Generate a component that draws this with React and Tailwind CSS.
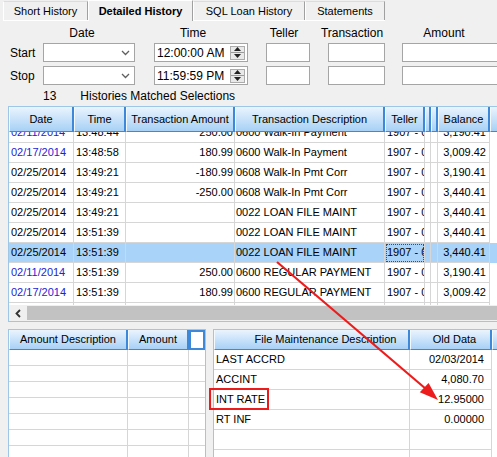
import React from 'react'

const gridCols = [
  { w: 'w-[65px]', label: 'Date' },
  { w: 'w-[52px]', label: 'Time' },
  { w: 'w-[109px]', label: 'Transaction Amount' },
  { w: 'w-[150px]', label: 'Transaction Description' },
  { w: 'w-[40px]', label: 'Teller' },
  { w: 'w-[6px]', label: '' },
  { w: 'w-[7px]', label: '' },
  { w: 'w-[52px]', label: 'Balance' },
  { w: 'w-[29px]', label: '' },
]

const rows = [
  { date: '02/11/2014', time: '13:48:44', amt: '250.00', desc: '0600 Walk-In Payment', bal: '3,190.41', blue: true },
  { date: '02/17/2014', time: '13:48:58', amt: '180.99', desc: '0600 Walk-In Payment', bal: '3,009.42', blue: true },
  { date: '02/25/2014', time: '13:49:21', amt: '-180.99', desc: '0608 Walk-In Pmt Corr', bal: '3,190.41' },
  { date: '02/25/2014', time: '13:49:21', amt: '-250.00', desc: '0608 Walk-In Pmt Corr', bal: '3,440.41' },
  { date: '02/25/2014', time: '13:49:21', amt: '', desc: '0022 LOAN FILE MAINT', bal: '3,440.41' },
  { date: '02/25/2014', time: '13:51:39', amt: '', desc: '0022 LOAN FILE MAINT', bal: '3,440.41' },
  { date: '02/25/2014', time: '13:51:39', amt: '', desc: '0022 LOAN FILE MAINT', bal: '3,440.41', selected: true },
  { date: '02/11/2014', time: '13:51:39', amt: '250.00', desc: '0600 REGULAR PAYMENT', bal: '3,190.41', blue: true },
  { date: '02/17/2014', time: '13:51:39', amt: '180.99', desc: '0600 REGULAR PAYMENT', bal: '3,009.42', blue: true },
  { date: '', time: '', amt: '', desc: '', bal: '' },
]

const fmRows = [
  ['LAST ACCRD', '02/03/2014'],
  ['ACCINT', '4,080.70'],
  ['INT RATE', '12.95000'],
  ['RT INF', '0.00000'],
  ['', ''],
  ['', ''],
]

const headCell =
  'h-full shrink-0 flex items-center justify-center whitespace-nowrap overflow-hidden bg-linear-to-b from-[#eaf4fd] to-[#a7d1f5] border-l border-l-[#f4f9fe] border-r-2 border-r-[#3d88d8] border-b border-b-[#3d88d8]'
const cell = 'h-full shrink-0 flex items-center whitespace-nowrap overflow-hidden border-r border-b border-[#d6d6d6]'

const Tab = ({ w, selected, children }) => (
  <div
    className={
      selected
        ? `${w} h-[21px] -mb-px flex items-center justify-center font-bold bg-[#f0f0f0] border-t border-l border-white border-r border-r-[#a0a0a0]`
        : `${w} h-[19px] flex items-center justify-center bg-[#f0f0f0] border-t border-t-[#dcdcdc] border-l border-l-white border-r border-r-[#a0a0a0]`
    }
  >
    {children}
  </div>
)

const Box = ({ w, children }) => (
  <div className={`${w} h-[19px] shrink-0 bg-white border border-[#a5a5a5] flex items-center`}>{children}</div>
)

const Combo = () => (
  <Box w="w-[92px]">
    <div className="flex-1" />
    <svg width="9" height="6" viewBox="0 0 9 6" className="mr-[4px]">
      <path d="M1 1 L4.5 4.5 L8 1" fill="none" stroke="#606060" strokeWidth="1.3" />
    </svg>
  </Box>
)

const TimeBox = ({ value }) => (
  <Box w="w-[94px]">
    <span className="pl-[2px] flex-1 text-[12px]">{value}</span>
    <div className="w-[15px] h-[14px] mr-[2px] border border-[#acacac] bg-[#e9e9e9] flex flex-col">
      <div className="flex-1 flex items-center justify-center border-b border-[#9a9a9a]">
        <svg width="7" height="4" viewBox="0 0 7 4"><path d="M0 4 L3.5 0 L7 4 Z" fill="#222" /></svg>
      </div>
      <div className="flex-1 flex items-center justify-center">
        <svg width="7" height="4" viewBox="0 0 7 4"><path d="M0 0 L3.5 4 L7 0 Z" fill="#222" /></svg>
      </div>
    </div>
  </Box>
)

const FilterRow = ({ label, time }) => (
  <div className="flex items-center h-[19px]">
    <div className="w-[43px] shrink-0 pl-[10px] text-[12px]">{label}</div>
    <Combo />
    <div className="ml-[19px]"><TimeBox value={time} /></div>
    <div className="ml-[18px]"><Box w="w-[44px]" /></div>
    <div className="ml-[18px]"><Box w="w-[57px]" /></div>
    <div className="ml-[17px]"><Box w="w-[120px]" /></div>
  </div>
)

export default function App() {
  return (
    <div className="relative w-[497px] h-[457px] overflow-hidden bg-[#f0f0f0] text-black font-['Liberation_Sans',Arial,sans-serif] text-[11px] leading-none">
      {/* tabs */}
      <div className="pl-[3px]">
        <div className="inline-flex items-end border-b border-white">
          <Tab w="w-[85px]">Short History</Tab>
          <Tab w="w-[105px]" selected>Detailed History</Tab>
          <Tab w="w-[112px]">SQL Loan History</Tab>
          <Tab w="w-[80px]">Statements</Tab>
        </div>
      </div>

      {/* filter */}
      <div className="flex h-[13px] mt-[6px] text-[12px] whitespace-nowrap">
        <div className="ml-[52px] w-[60px] text-center">Date</div>
        <div className="ml-[51px] w-[60px] text-center">Time</div>
        <div className="ml-[31px] w-[60px] text-center">Teller</div>
        <div className="ml-[3px] w-[70px] text-center">Transaction</div>
        <div className="ml-[17px] w-[80px] text-center">Amount</div>
      </div>
      <div className="mt-[3px] flex flex-col gap-[4px]">
        <FilterRow label="Start" time="12:00:00 AM" />
        <FilterRow label="Stop" time="11:59:59 PM" />
      </div>
      <div className="flex items-center h-[21px] text-[12px]">
        <span className="ml-[43px]">13</span>
        <span className="ml-[24px]">Histories Matched Selections</span>
      </div>

      {/* history grid */}
      <div className="ml-[8px] w-[520px] h-[216px] border border-[#9dc7e4] bg-white flex flex-col">
        <div className="flex h-[25px] shrink-0">
          {gridCols.map((c, i) => (
            <div key={i} className={`${headCell} ${c.w}`}>{c.label}</div>
          ))}
        </div>
        <div className="h-[173px] overflow-hidden">
          <div className="-mt-[9px]">
            {rows.map((r, i) => (
              <div key={i} className={`flex h-[20px] ${r.selected ? 'bg-[#a9d3f8]' : ''}`}>
                <div className={`${cell} w-[65px] pl-[2px] ${r.blue ? 'text-[#2323d6]' : ''}`}>{r.date}</div>
                <div className={`${cell} w-[52px] pl-[2px]`}>{r.time}</div>
                <div className={`${cell} w-[109px] justify-end pr-[1px]`}>{r.amt}</div>
                <div className={`${cell} w-[150px] pl-[1px]`}>{r.desc}</div>
                <div className={`${cell} w-[40px] pl-[2px] ${r.selected ? 'outline-1 outline-dotted outline-[#4a4a4a] -outline-offset-2' : ''}`}>
                  {r.date ? '1907 - 0' : ''}
                </div>
                <div className={`${cell} w-[6px]`} />
                <div className={`${cell} w-[7px]`} />
                <div className={`${cell} w-[52px] justify-end pr-[3px]`}>{r.bal}</div>
                <div className={`${cell} w-[29px] border-b-0`} />
              </div>
            ))}
          </div>
        </div>
        <div className="h-[16px] shrink-0 flex bg-[#f0f0f0]">
          <div className="w-[18px] flex items-center justify-center">
            <svg width="6" height="9" viewBox="0 0 6 9"><path d="M5 1 L1.5 4.5 L5 8" fill="none" stroke="#333" strokeWidth="1.8" /></svg>
          </div>
          <div className="flex-1 my-[1px] bg-[#c2c2c2]" />
        </div>
      </div>

      {/* lower panels */}
      <div className="flex mt-[7px]">
        <div className="ml-[8px] w-[198px] h-[130px] shrink-0 border border-[#9dc7e4] bg-white overflow-hidden">
          <div className="flex h-[20px]">
            <div className={`${headCell} w-[119px]`}>Amount Description</div>
            <div className={`${headCell} w-[61px]`}>Amount</div>
            <div className="w-[16px] h-full shrink-0 bg-white border-2 border-[#3d88d8]" />
          </div>
          {[0, 1, 2, 3, 4, 5, 6].map((i) => (
            <div key={i} className="flex h-[16px]">
              <div className={`${cell} w-[119px]`} />
              <div className={`${cell} w-[61px]`} />
              <div className={`${cell} w-[16px] border-r-0`} />
            </div>
          ))}
        </div>
        <div className="ml-[7px] w-[300px] h-[130px] shrink-0 border border-[#9dc7e4] bg-white overflow-hidden">
          <div className="flex h-[20px]">
            <div className={`${headCell} w-[196px] pl-[28px]`}>File Maintenance Description</div>
            <div className={`${headCell} w-[82px] pl-[8px]`}>Old Data</div>
            <div className={`${headCell} w-[20px]`} />
          </div>
          {fmRows.map(([d, v], i) => (
            <div key={i} className="flex h-[20px]">
              <div className={`${cell} w-[196px] pl-[2px]`}>{d}</div>
              <div className={`${cell} w-[82px] justify-end pr-[7px]`}>{v}</div>
            </div>
          ))}
        </div>
      </div>

      {/* annotation */}
      <div className="absolute left-[209px] top-[388px] w-[60px] h-[22px] border-2 border-[#ec1c1c]" />
      <svg className="absolute left-0 top-0 pointer-events-none" width="497" height="457">
        <line x1="277" y1="262" x2="426" y2="389" stroke="#ec1c1c" strokeWidth="2.2" />
        <path d="M438 400 L419.8 392.3 L428.6 382.9 Z" fill="#ec1c1c" />
      </svg>
    </div>
  )
}
